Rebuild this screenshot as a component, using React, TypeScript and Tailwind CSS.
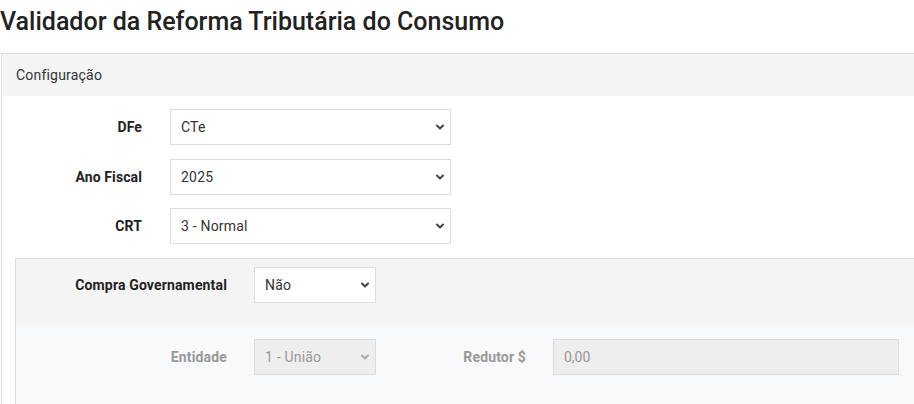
import { ChevronDown } from "lucide-react";

interface SelectProps {
  value: string;
  width: string;
  disabled?: boolean;
}

const FakeSelect = ({ value, width, disabled }: SelectProps) => {
  return (
    <div
      className={`relative h-[36px] ${width} border ${
        disabled ? "border-[#dcdcdc] bg-[#eeeeee] text-[#999]" : "border-[#dddddd] bg-white text-[#333]"
      }`}
    >
      <select
        disabled={disabled}
        defaultValue={value}
        className="h-full w-full appearance-none bg-transparent pl-[10px] pr-8 text-[14px] tracking-[0.2px] outline-none"
      >
        <option>{value}</option>
      </select>
      <ChevronDown
        className={`pointer-events-none absolute right-[4px] top-1/2 h-[12px] w-[12px] -translate-y-1/2 ${
          disabled ? "text-[#aaa]" : "text-[#444]"
        }`}
        strokeWidth={4}
      />
    </div>
  );
};

const Row = ({ label, children, className = "" }: { label: string; children: React.ReactNode; className?: string }) => (
  <div className={`flex items-center ${className}`}>
    <label className="w-[140px] text-right text-[14px] font-bold tracking-[0.1px] text-[#222]">{label}</label>
    <div className="ml-[28px]">{children}</div>
  </div>
);

export default function App() {
  return (
    <div className="h-[404px] w-[914px] overflow-hidden bg-white font-['Roboto',sans-serif] text-[14px] text-[#333]">
      <h1 className="mt-[7px] text-[25px] font-medium leading-[30px] text-[#222]">
        Validador da Reforma Tributária do Consumo
      </h1>

      {/* Painel de configuração */}
      <div className="ml-px mt-[16px] w-[940px] border border-[#dddddd]">
        <div className="bg-[#f4f4f4] px-[14px] py-[11px] leading-5 tracking-[0.2px] text-[#333]">Configuração</div>

        <div className="pt-[13px]">
          <Row label="DFe">
            <FakeSelect value="CTe" width="w-[281px]" />
          </Row>
          <Row label="Ano Fiscal" className="mt-[14px]">
            <FakeSelect value="2025" width="w-[281px]" />
          </Row>
          <Row label="CRT" className="mt-[13px]">
            <FakeSelect value="3 - Normal" width="w-[281px]" />
          </Row>

          {/* Compra governamental */}
          <div className="ml-[13px] mt-[14px] border border-[#dddddd]">
            <div className="flex items-center bg-[#f4f4f4] pb-[22px] pt-[8px]">
              <label className="w-[211px] text-right text-[14px] font-bold tracking-[0.15px] text-[#222]">
                Compra Governamental
              </label>
              <div className="ml-[27px]">
                <FakeSelect value="Não" width="w-[122px]" />
              </div>
            </div>
            <div className="flex items-center bg-[#f7f9fa] pb-[30px] pt-[14px]">
              <label className="w-[211px] text-right text-[14px] font-bold tracking-[0.15px] text-[#999]">Entidade</label>
              <div className="ml-[27px]">
                <FakeSelect value="1 - União" width="w-[122px]" disabled />
              </div>
              <label className="w-[150px] text-right text-[14px] font-bold tracking-[0.15px] text-[#999]">Redutor $</label>
              <input
                disabled
                defaultValue="0,00"
                className="ml-[27px] h-[36px] w-[346px] border border-[#dcdcdc] bg-[#eeeeee] px-[10px] text-[14px] text-[#999]"
              />
            </div>
          </div>
        </div>
      </div>
    </div>
  );
}
